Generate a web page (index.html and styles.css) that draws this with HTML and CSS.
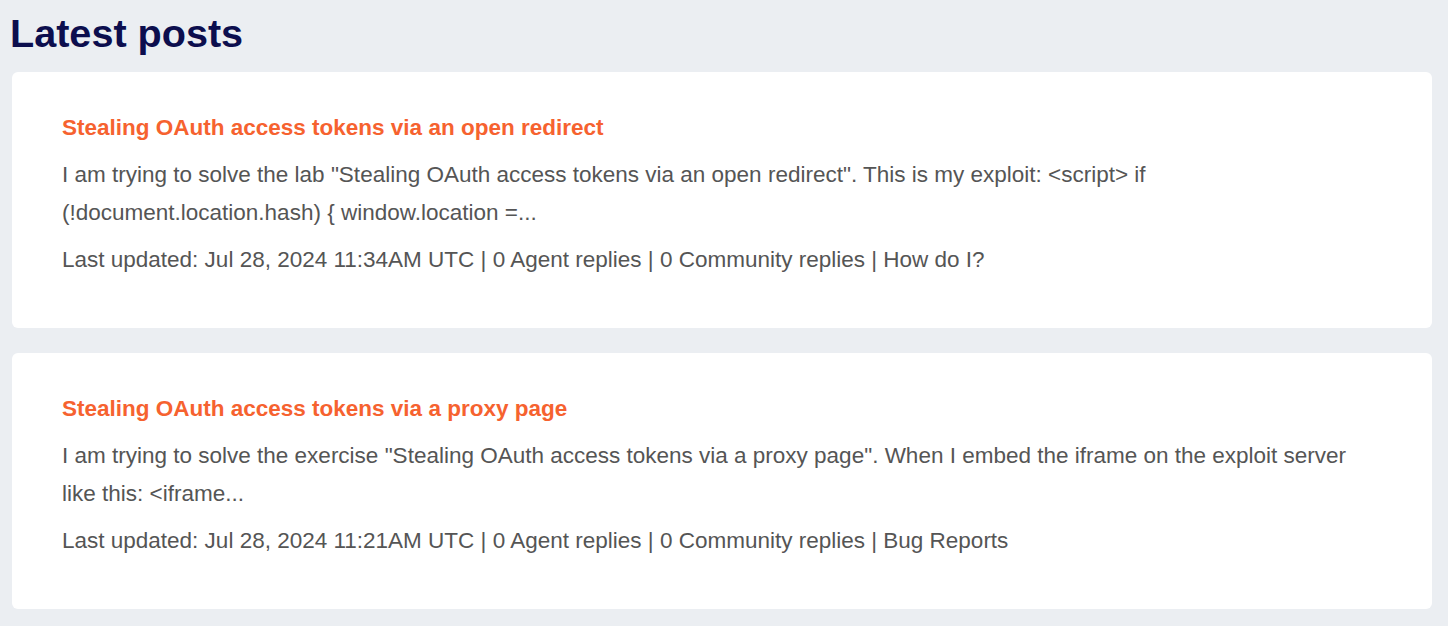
FILE: index.html
```html
<!DOCTYPE html>
<html lang="en">
<head>
  <meta charset="UTF-8">
  <meta name="viewport" content="width=device-width, initial-scale=1.0">
  <title>Latest posts</title>
  <link rel="stylesheet" href="styles.css">
</head>
<body>
  <div class="wrap">
    <h1 class="heading">Latest posts</h1>
    <div class="posts">
      <div class="post">
        <a class="post-title" href="#">Stealing OAuth access tokens via an open redirect</a>
        <p class="post-text">I am trying to solve the lab "Stealing OAuth access tokens via an open redirect". This is my exploit: &lt;script&gt; if (!document.location.hash) { window.location =...</p>
        <p class="post-meta">Last updated: Jul 28, 2024 11:34AM UTC | 0 Agent replies | 0 Community replies | How do I?</p>
      </div>
      <div class="post">
        <a class="post-title" href="#">Stealing OAuth access tokens via a proxy page</a>
        <p class="post-text">I am trying to solve the exercise "Stealing OAuth access tokens via a proxy page". When I embed the iframe on the exploit server like this: &lt;iframe...</p>
        <p class="post-meta">Last updated: Jul 28, 2024 11:21AM UTC | 0 Agent replies | 0 Community replies | Bug Reports</p>
      </div>
    </div>
  </div>
</body>
</html>
```

FILE: styles.css
```css
html, body{
  width: 100%;
  height: 100%;
  box-sizing: border-box;
  margin: 0;
  padding: 0;
}
body{
  background-color: #ebeef2;
  font-family: "Liberation Sans", Arial, sans-serif;
}
.wrap{
  padding: 9px 16px 0 12px;
}
.heading{
  margin: 0 0 15px -2px;
  font-size: 39.6px;
  line-height: 48px;
  font-weight: bold;
  color: #0c0e4e;
}
.posts{
  display: flex;
  flex-direction: column;
  gap: 25px;
}
.post{
  background-color: #fff;
  border-radius: 6px;
  padding: 42px 60px 49px 50px;
}
.post-title{
  display: block;
  margin-bottom: 15px;
  font-size: 22.5px;
  line-height: 27px;
  font-weight: bold;
  color: #f6622f;
  text-decoration: none;
}
p{
  margin: 0;
}
.post-text, .post-meta{
  font-size: 22.5px;
  line-height: 38px;
  color: #555;
}
.post-text{
  margin-bottom: 9px;
}
```
